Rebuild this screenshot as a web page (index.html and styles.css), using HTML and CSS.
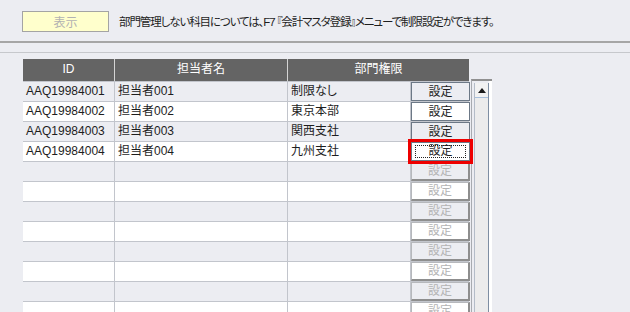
FILE: index.html
```html
<!DOCTYPE html>
<html lang="ja">
<head>
    <meta charset="UTF-8">
    <title>部門権限設定</title>
    <link rel="stylesheet" href="styles.css">
</head>
<body>
    <div class="topbar">
        <button class="show-btn" disabled>表示</button>
        <span class="note">部門管理しない科目については、F7 『会計マスタ登録』メニューで制限設定ができます。</span>
    </div>
    <div class="sep"></div>

    <div class="grid-area">
        <div class="table">
            <div class="row head">
                <div class="cell">ID</div>
                <div class="cell">担当者名</div>
                <div class="cell">部門権限</div>
            </div>
            <div class="row odd">
                <div class="cell">AAQ19984001</div>
                <div class="cell">担当者001</div>
                <div class="cell">制限なし</div>
                <div class="cell btn-cell"><button class="set-btn">設定</button></div>
            </div>
            <div class="row even">
                <div class="cell">AAQ19984002</div>
                <div class="cell">担当者002</div>
                <div class="cell">東京本部</div>
                <div class="cell btn-cell"><button class="set-btn">設定</button></div>
            </div>
            <div class="row odd">
                <div class="cell">AAQ19984003</div>
                <div class="cell">担当者003</div>
                <div class="cell">関西支社</div>
                <div class="cell btn-cell"><button class="set-btn">設定</button></div>
            </div>
            <div class="row even">
                <div class="cell">AAQ19984004</div>
                <div class="cell">担当者004</div>
                <div class="cell">九州支社</div>
                <div class="cell btn-cell"><button class="set-btn focused"><span class="focus-ring">設定</span></button></div>
            </div>
            <div class="row odd">
                <div class="cell"></div><div class="cell"></div><div class="cell"></div>
                <div class="cell btn-cell"><button class="set-btn off" disabled>設定</button></div>
            </div>
            <div class="row even">
                <div class="cell"></div><div class="cell"></div><div class="cell"></div>
                <div class="cell btn-cell"><button class="set-btn off" disabled>設定</button></div>
            </div>
            <div class="row odd">
                <div class="cell"></div><div class="cell"></div><div class="cell"></div>
                <div class="cell btn-cell"><button class="set-btn off" disabled>設定</button></div>
            </div>
            <div class="row even">
                <div class="cell"></div><div class="cell"></div><div class="cell"></div>
                <div class="cell btn-cell"><button class="set-btn off" disabled>設定</button></div>
            </div>
            <div class="row odd">
                <div class="cell"></div><div class="cell"></div><div class="cell"></div>
                <div class="cell btn-cell"><button class="set-btn off" disabled>設定</button></div>
            </div>
            <div class="row even">
                <div class="cell"></div><div class="cell"></div><div class="cell"></div>
                <div class="cell btn-cell"><button class="set-btn off" disabled>設定</button></div>
            </div>
            <div class="row odd">
                <div class="cell"></div><div class="cell"></div><div class="cell"></div>
                <div class="cell btn-cell"><button class="set-btn off" disabled>設定</button></div>
            </div>
            <div class="row even">
                <div class="cell"></div><div class="cell"></div><div class="cell"></div>
                <div class="cell btn-cell"><button class="set-btn off" disabled>設定</button></div>
            </div>
        </div>

        <div class="scroll">
            <div class="track">
                <div class="arrow-up">
                    <svg width="8" height="5" viewBox="0 0 8 5"><path d="M0 5 L4 0 L8 5 Z" fill="#1a1a1a"/></svg>
                </div>
            </div>
            <div class="edge"></div>
        </div>
    </div>
</body>
</html>
```

FILE: styles.css
```css
html, body {
    margin: 0;
    padding: 0;
    height: 100%;
    overflow: hidden;
}
body {
    background: #ecedf2;
    font-family: "Liberation Sans", "Noto Sans CJK JP", sans-serif;
    font-size: 12px;
    color: #1e1e1e;
    font-feature-settings: "palt";
}
.topbar {
    height: 43px;
    box-sizing: border-box;
    padding: 11px 0 0 22px;
    display: flex;
    align-items: flex-start;
    border-bottom: 2px solid #a6a6a6;
}
.show-btn {
    width: 87px;
    height: 21px;
    margin: 0;
    padding: 0;
    background: #ffffcc;
    border: 1px solid #a4a4a4;
    color: #b2b2b2;
    font-family: inherit;
    font-size: 12px;
}
.note {
    margin-left: 10px;
    line-height: 22px;
    font-size: 11.5px;
    letter-spacing: -1.1px;
}
.sep {
    margin-top: 9px;
    border-top: 1px solid #c6c8cc;
}
.grid-area {
    display: flex;
    align-items: flex-start;
    margin-top: 6px;
    padding-left: 23px;
}
.table {
    width: 446px;
}
.row {
    display: grid;
    grid-template-columns: 92px 173px 123px 58px;
    height: 20px;
    box-sizing: border-box;
    border-top: 1px solid #c2c5cc;
}
.row.odd {
    background: #ecedf2;
}
.row.even {
    background: #ffffff;
}
.cell {
    box-sizing: border-box;
    padding-left: 3px;
    line-height: 19px;
    white-space: nowrap;
    border-right: 1px solid #c2c5cc;
}
.row.head {
    grid-template-columns: 92px 173px 181px;
    height: 22px;
    border-top: none;
    background: #646464;
    color: #ffffff;
}
.row.head .cell {
    padding: 0;
    text-align: center;
    line-height: 21px;
    border-right: 1px solid #d4d4d4;
}
.row.head .cell:last-child {
    border-right: none;
}
.btn-cell {
    padding: 0;
    border-right: none;
    position: relative;
}
.set-btn {
    display: block;
    width: 59px;
    height: 19px;
    margin: 0;
    padding: 0;
    background: transparent;
    border: 1px solid #6c7886;
    color: #1e1e1e;
    font-family: inherit;
    font-size: 12px;
    line-height: 16px;
}
.set-btn.off {
    color: #b4b4b4;
    border: 1px solid #b6b8bc;
    border-right: 2px solid #8e8e8e;
    border-bottom: 2px solid #8e8e8e;
}
.set-btn.focused {
    outline: 3px solid #ee0000;
    outline-offset: 0;
    position: relative;
    z-index: 1;
}
.focus-ring {
    display: block;
    margin: 2px 3px;
    border: 1px dotted #222;
    line-height: 11px;
    height: 11px;
}
.scroll {
    display: flex;
    margin: 20px 0 0 2px;
    height: 240px;
    border-top: 2px solid #909090;
    border-left: 1px solid #a8abb0;
}
.track {
    width: 13px;
    margin: 2px 0 0 2px;
    background: #ececec;
    border-left: 1px solid #b4bcc8;
    border-right: 1px solid #7e8ea2;
}
.arrow-up {
    height: 14px;
    border-bottom: 1px solid #a8c0dc;
    background: #f2f2f2;
    display: flex;
    align-items: center;
    justify-content: center;
}
.arrow-up svg {
    display: block;
}
.edge {
    width: 3px;
    background: #ffffff;
}
```
